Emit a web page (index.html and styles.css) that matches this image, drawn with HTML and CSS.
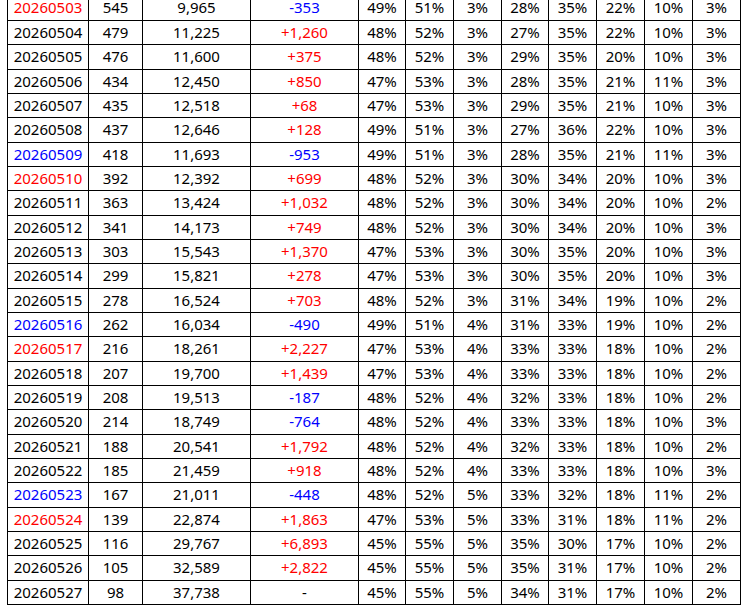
FILE: index.html
```html
<!DOCTYPE html>
<html>
<head>
<meta charset="utf-8">
<link rel="stylesheet" href="styles.css">
</head>
<body>
<table class="sheet">
<colgroup>
<col class="c-date"><col class="c-a"><col class="c-b"><col class="c-b"><col class="c-p47"><col class="c-p"><col class="c-p"><col class="c-p47"><col class="c-p"><col class="c-p"><col class="c-p"><col class="c-p">
</colgroup>
<tbody>
<tr class="first"><td class="red">20260503</td><td>545</td><td>9,965</td><td class="blue">-353</td><td>49%</td><td>51%</td><td>3%</td><td>28%</td><td>35%</td><td>22%</td><td>10%</td><td>3%</td></tr>
<tr><td>20260504</td><td>479</td><td>11,225</td><td class="red">+1,260</td><td>48%</td><td>52%</td><td>3%</td><td>27%</td><td>35%</td><td>22%</td><td>10%</td><td>3%</td></tr>
<tr><td>20260505</td><td>476</td><td>11,600</td><td class="red">+375</td><td>48%</td><td>52%</td><td>3%</td><td>29%</td><td>35%</td><td>20%</td><td>10%</td><td>3%</td></tr>
<tr><td>20260506</td><td>434</td><td>12,450</td><td class="red">+850</td><td>47%</td><td>53%</td><td>3%</td><td>28%</td><td>35%</td><td>21%</td><td>11%</td><td>3%</td></tr>
<tr><td>20260507</td><td>435</td><td>12,518</td><td class="red">+68</td><td>47%</td><td>53%</td><td>3%</td><td>29%</td><td>35%</td><td>21%</td><td>10%</td><td>3%</td></tr>
<tr><td>20260508</td><td>437</td><td>12,646</td><td class="red">+128</td><td>49%</td><td>51%</td><td>3%</td><td>27%</td><td>36%</td><td>22%</td><td>10%</td><td>3%</td></tr>
<tr><td class="blue">20260509</td><td>418</td><td>11,693</td><td class="blue">-953</td><td>49%</td><td>51%</td><td>3%</td><td>28%</td><td>35%</td><td>21%</td><td>11%</td><td>3%</td></tr>
<tr><td class="red">20260510</td><td>392</td><td>12,392</td><td class="red">+699</td><td>48%</td><td>52%</td><td>3%</td><td>30%</td><td>34%</td><td>20%</td><td>10%</td><td>3%</td></tr>
<tr><td>20260511</td><td>363</td><td>13,424</td><td class="red">+1,032</td><td>48%</td><td>52%</td><td>3%</td><td>30%</td><td>34%</td><td>20%</td><td>10%</td><td>2%</td></tr>
<tr><td>20260512</td><td>341</td><td>14,173</td><td class="red">+749</td><td>48%</td><td>52%</td><td>3%</td><td>30%</td><td>34%</td><td>20%</td><td>10%</td><td>3%</td></tr>
<tr><td>20260513</td><td>303</td><td>15,543</td><td class="red">+1,370</td><td>47%</td><td>53%</td><td>3%</td><td>30%</td><td>35%</td><td>20%</td><td>10%</td><td>3%</td></tr>
<tr><td>20260514</td><td>299</td><td>15,821</td><td class="red">+278</td><td>47%</td><td>53%</td><td>3%</td><td>30%</td><td>35%</td><td>20%</td><td>10%</td><td>3%</td></tr>
<tr><td>20260515</td><td>278</td><td>16,524</td><td class="red">+703</td><td>48%</td><td>52%</td><td>3%</td><td>31%</td><td>34%</td><td>19%</td><td>10%</td><td>2%</td></tr>
<tr><td class="blue">20260516</td><td>262</td><td>16,034</td><td class="blue">-490</td><td>49%</td><td>51%</td><td>4%</td><td>31%</td><td>33%</td><td>19%</td><td>10%</td><td>2%</td></tr>
<tr><td class="red">20260517</td><td>216</td><td>18,261</td><td class="red">+2,227</td><td>47%</td><td>53%</td><td>4%</td><td>33%</td><td>33%</td><td>18%</td><td>10%</td><td>2%</td></tr>
<tr><td>20260518</td><td>207</td><td>19,700</td><td class="red">+1,439</td><td>47%</td><td>53%</td><td>4%</td><td>33%</td><td>33%</td><td>18%</td><td>10%</td><td>2%</td></tr>
<tr><td>20260519</td><td>208</td><td>19,513</td><td class="blue">-187</td><td>48%</td><td>52%</td><td>4%</td><td>32%</td><td>33%</td><td>18%</td><td>10%</td><td>2%</td></tr>
<tr><td>20260520</td><td>214</td><td>18,749</td><td class="blue">-764</td><td>48%</td><td>52%</td><td>4%</td><td>33%</td><td>33%</td><td>18%</td><td>10%</td><td>3%</td></tr>
<tr><td>20260521</td><td>188</td><td>20,541</td><td class="red">+1,792</td><td>48%</td><td>52%</td><td>4%</td><td>32%</td><td>33%</td><td>18%</td><td>10%</td><td>2%</td></tr>
<tr><td>20260522</td><td>185</td><td>21,459</td><td class="red">+918</td><td>48%</td><td>52%</td><td>4%</td><td>33%</td><td>33%</td><td>18%</td><td>10%</td><td>3%</td></tr>
<tr><td class="blue">20260523</td><td>167</td><td>21,011</td><td class="blue">-448</td><td>48%</td><td>52%</td><td>5%</td><td>33%</td><td>32%</td><td>18%</td><td>11%</td><td>2%</td></tr>
<tr><td class="red">20260524</td><td>139</td><td>22,874</td><td class="red">+1,863</td><td>47%</td><td>53%</td><td>5%</td><td>33%</td><td>31%</td><td>18%</td><td>11%</td><td>2%</td></tr>
<tr><td>20260525</td><td>116</td><td>29,767</td><td class="red">+6,893</td><td>45%</td><td>55%</td><td>5%</td><td>35%</td><td>30%</td><td>17%</td><td>10%</td><td>2%</td></tr>
<tr><td>20260526</td><td>105</td><td>32,589</td><td class="red">+2,822</td><td>45%</td><td>55%</td><td>5%</td><td>35%</td><td>31%</td><td>17%</td><td>10%</td><td>2%</td></tr>
<tr><td>20260527</td><td>98</td><td>37,738</td><td>-</td><td>45%</td><td>55%</td><td>5%</td><td>34%</td><td>31%</td><td>17%</td><td>10%</td><td>2%</td></tr>
</tbody>
</table>
</body>
</html>
```

FILE: styles.css
```css
html, body {
  margin: 0;
  padding: 0;
  background: #ffffff;
}

body {
  font-family: "Noto Sans", "DejaVu Sans", sans-serif;
  font-size: 15px;
  color: #000000;
}

.sheet {
  border-collapse: collapse;
  table-layout: fixed;
  width: 734px;
  margin: 0 0 0 7px;
}

.sheet td {
  border: 1px solid #000000;
  height: 24.333px;
  padding: 0 0 1px;
  text-align: center;
  vertical-align: middle;
  line-height: 14px;
  white-space: nowrap;
  overflow: hidden;
  box-sizing: border-box;
}

.sheet .first td {
  border-top: none;
  height: 20.5px;
  padding: 0 0 6px;
}

.c-date { width: 81px; }
.c-a { width: 54px; }
.c-b { width: 108px; }
.c-p { width: 48px; }
.c-p47 { width: 47px; }

.red { color: #ff0000; }
.blue { color: #0000ff; }
```
